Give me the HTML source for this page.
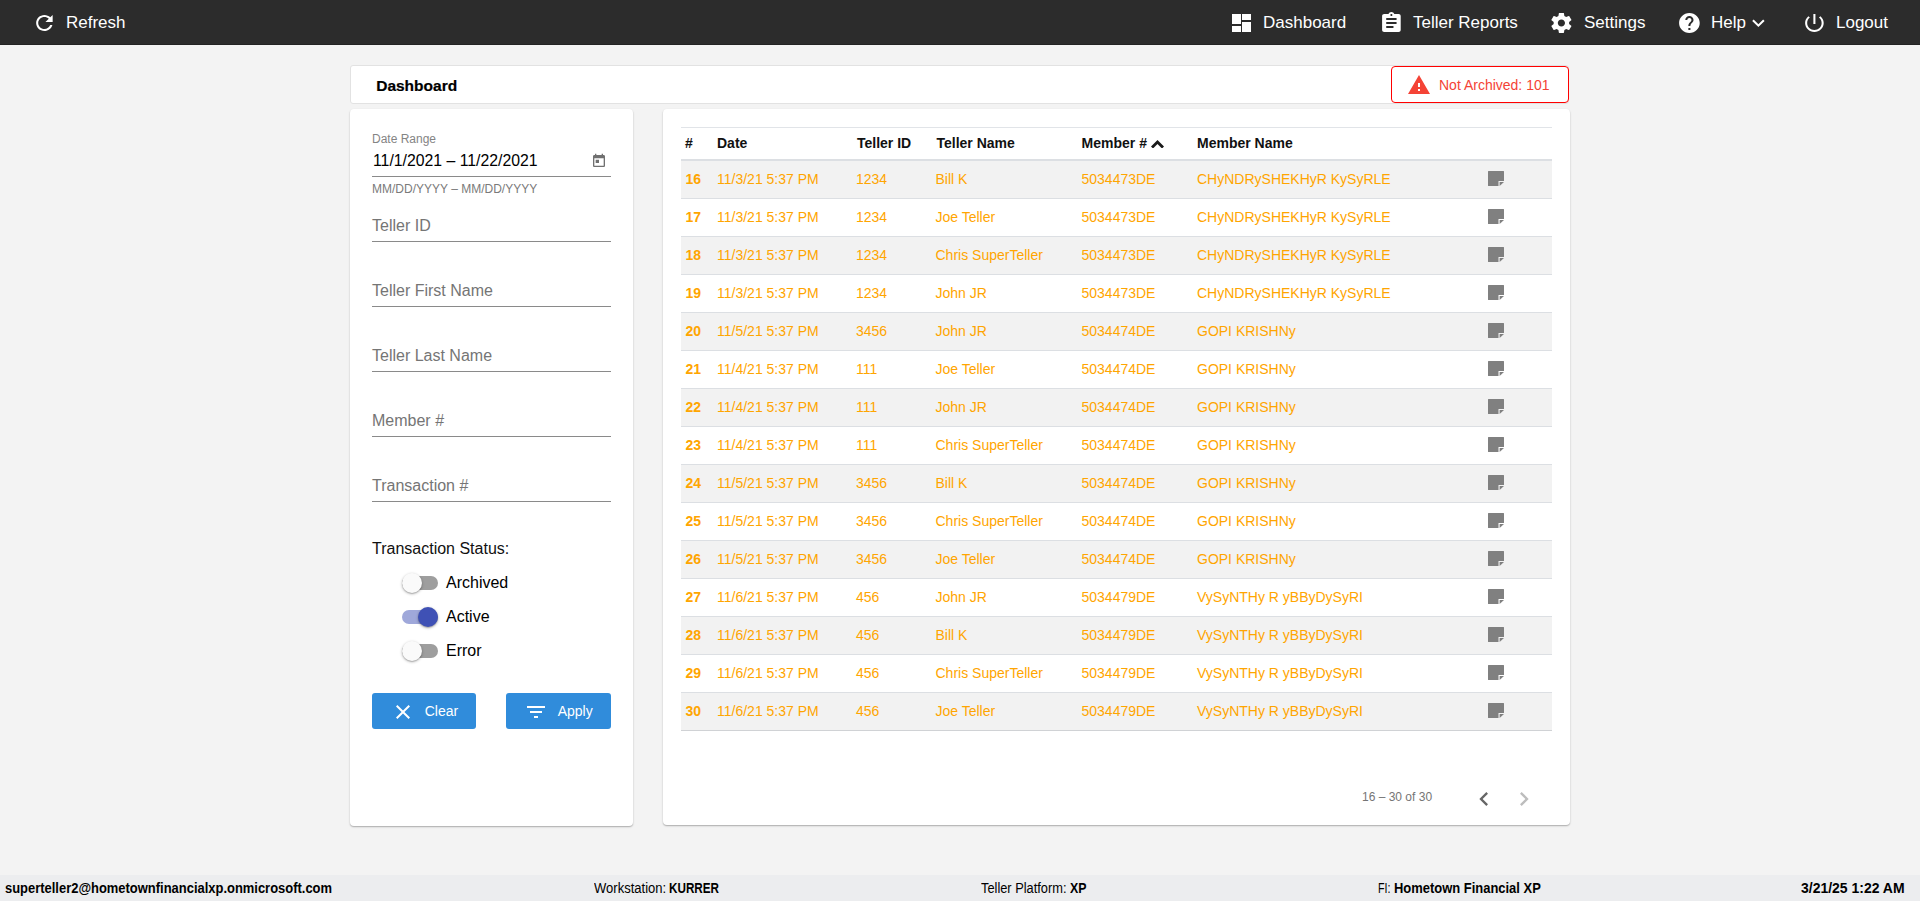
<!DOCTYPE html>
<html><head><meta charset="utf-8"><title>Dashboard</title>
<style>
*{box-sizing:border-box;margin:0;padding:0}
html,body{width:1920px;height:901px;overflow:hidden;background:#f3f3f3;font-family:"Liberation Sans",sans-serif;color:#000}
.abs{position:absolute}
#top{position:absolute;left:0;top:0;width:1920px;height:45px;background:#2c2c2c;border-bottom:1px solid #232323}
.nav{position:absolute;top:0;height:46px;line-height:46px;color:#fff;font-size:17px;white-space:nowrap}
.ico{position:absolute;fill:#fff}
#title{position:absolute;left:350px;top:65px;width:1219px;height:39px;background:#fff;border:1px solid #e2e2e2;border-radius:3px}
#title b{position:absolute;left:25.2px;top:1px;line-height:37px;font-size:15.5px;font-weight:bold;-webkit-text-stroke:.2px #000}
#na{position:absolute;left:1391px;top:66px;width:178px;height:37px;border:1px solid #ff0000;border-radius:4px;background:#fff;color:#f44336;font-size:14px;line-height:37px}
#na span{position:absolute;left:47px;top:0;white-space:nowrap}
.card{position:absolute;background:#fff;border-radius:4px;box-shadow:0 1px 2px rgba(0,0,0,.22),0 1px 1px rgba(0,0,0,.10)}
#left{left:350px;top:109px;width:283px;height:717px}
#right{left:663px;top:109px;width:907px;height:716px}
.lbl{position:absolute;left:372px;color:#757575;font-size:16px;white-space:nowrap}
.ul{position:absolute;left:372px;width:239px;height:1px;background:#8a8a8a}
.tg{position:absolute;left:402px;width:36px;height:14px}
.tg i{position:absolute;left:0;top:0;width:36px;height:14px;border-radius:7px;background:#9e9e9e}
.tg b{position:absolute;left:0;top:-3px;width:20px;height:20px;border-radius:50%;background:#fafafa;box-shadow:0 1px 3px rgba(0,0,0,.3),0 1px 1px rgba(0,0,0,.15)}
.tg.on i{background:#9fa8da}
.tg.on b{left:16px;background:#3f51b5}
.tl{position:absolute;left:446px;font-size:16px;white-space:nowrap}
.btn{position:absolute;top:693px;height:36px;background:#308cdb;border-radius:3px;color:#fff;font-size:14px;line-height:36px}
.row{position:absolute;left:681px;width:871px;height:38px;border-bottom:1px solid #dcdfe3;color:#ffa500;font-size:14px;line-height:37px;white-space:nowrap}
.row.odd{background:#f2f2f2}.row.last{border-bottom-color:#d0d2d5}
.c{position:absolute;top:0}
.c0{left:4.5px;font-weight:bold}.c1{left:36px}.c2{left:175px}.c3{left:254.5px}.c4{left:400.5px}.c5{left:516px}
.note{position:absolute;left:807px;top:10px;width:16px;height:15px;fill:#808080}
#hdr{position:absolute;left:681px;top:127px;width:871px;height:34px;border-top:1px solid #e1e4e8;border-bottom:2px solid #dcdfe3;font-size:14px;font-weight:bold;line-height:31px;color:#111;white-space:nowrap}
#foot{position:absolute;left:0;top:875px;width:1920px;height:26px;background:#ecedef;font-size:13.8px;line-height:24px;overflow:hidden;white-space:nowrap}
#foot span{position:absolute;top:2px;transform-origin:0 50%}
</style></head><body>
<div id="top"></div>
<svg class="ico" preserveAspectRatio="none" style="left:31.6px;top:11px;width:24.8px;height:24px" viewBox="0 0 24 24"><path d="M17.65 6.35C16.2 4.9 14.21 4 12 4c-4.42 0-7.99 3.58-7.99 8s3.57 8 7.99 8c3.73 0 6.84-2.55 7.73-6h-2.08c-.82 2.33-3.04 4-5.65 4-3.31 0-6-2.69-6-6s2.690-6 6-6c1.660 0 3.140.69 4.220 1.780L13 11h7V4l-2.350 2.350z"/></svg>
<div class="nav" style="left:66px">Refresh</div>
<svg class="ico" style="left:1232px;top:14px;width:19px;height:18px" viewBox="0 0 19 18" shape-rendering="crispEdges"><rect x="0" y="0" width="9" height="10"/><rect x="0" y="12" width="9" height="6"/><rect x="10" y="0" width="9" height="6"/><rect x="10" y="8" width="9" height="10"/></svg>
<div class="nav" style="left:1263px">Dashboard</div>
<svg class="ico" preserveAspectRatio="none" style="left:1378.6px;top:11px;width:24.8px;height:24px" viewBox="0 0 24 24"><path d="M19 3h-4.180C14.400 1.840 13.300 1 12 1c-1.300 0-2.400.84-2.820 2H5c-1.100 0-2 .9-2 2v14c0 1.100.9 2 2 2h14c1.100 0 2-.9 2-2V5c0-1.100-.9-2-2-2zm-7 0c.55 0 1 .45 1 1s-.45 1-1 1-1-.45-1-1 .45-1 1-1zm2 14H7v-2h7v2zm3-4H7v-2h10v2zm0-4H7V7h10v2z"/></svg>
<div class="nav" style="left:1413px">Teller Reports</div>
<svg class="ico" preserveAspectRatio="none" style="left:1549.1px;top:11px;width:24.8px;height:24px" viewBox="0 0 24 24"><path d="M19.430 12.980c.04-.32.07-.64.07-.98s-.03-.66-.07-.98l2.110-1.650c.19-.15.24-.42.12-.64l-2-3.460c-.12-.22-.39-.3-.61-.22l-2.490 1c-.52-.4-1.080-.73-1.690-.98l-.38-2.650C14.460 2.180 14.250 2 14 2h-4c-.25 0-.46.18-.49.42l-.38 2.650c-.61.25-1.170.59-1.690.98l-2.490-1c-.23-.09-.49 0-.61.22l-2 3.460c-.13.22-.07.49.12.64l2.110 1.650c-.04.32-.07.65-.07.98s.03.66.07.98l-2.110 1.650c-.19.15-.24.42-.12.640l2 3.460c.12.22.39.3.61.22l2.490-1c.52.4 1.080.73 1.690.98l.38 2.650c.03.24.24.42.49.42h4c.25 0 .46-.18.49-.42l.38-2.650c.61-.25 1.170-.59 1.690-.98l2.490 1c.23.09.49 0 .61-.22l2-3.460c.12-.22.07-.49-.12-.64l-2.110-1.650zM12 15.500c-1.930 0-3.500-1.570-3.500-3.500s1.570-3.500 3.500-3.500 3.500 1.570 3.500 3.500-1.570 3.500-3.500 3.500z"/></svg>
<div class="nav" style="left:1584px">Settings</div>
<svg class="ico" preserveAspectRatio="none" style="left:1676.6px;top:11px;width:24.8px;height:24px" viewBox="0 0 24 24"><path d="M12 2C6.480 2 2 6.480 2 12s4.480 10 10 10 10-4.480 10-10S17.520 2 12 2zm1 17h-2v-2h2v2zm2.070-7.750l-.9.92C13.450 12.900 13 13.500 13 15h-2v-.5c0-1.100.45-2.100 1.170-2.830l1.240-1.260c.37-.36.59-.86.59-1.410 0-1.100-.9-2-2-2s-2 .9-2 2H8c0-2.210 1.790-4 4-4s4 1.790 4 4c0 .88-.36 1.680-.93 2.250z"/></svg>
<div class="nav" style="left:1711px">Help</div>
<svg class="ico" preserveAspectRatio="none" style="left:1745.6px;top:11px;width:24.8px;height:24px" viewBox="0 0 24 24"><path d="M16.590 8.590L12 13.170 7.410 8.590 6 10l6 6 6-6z"/></svg>
<svg class="ico" preserveAspectRatio="none" style="left:1801.6px;top:11px;width:24.8px;height:24px" viewBox="0 0 24 24"><path d="M13 3h-2v10h2V3zm4.830 2.170l-1.420 1.420C17.990 7.860 19 9.810 19 12c0 3.870-3.130 7-7 7s-7-3.130-7-7c0-2.190 1.010-4.140 2.580-5.420L6.170 5.170C4.230 6.820 3 9.260 3 12c0 4.970 4.030 9 9 9s9-4.030 9-9c0-2.740-1.230-5.180-3.170-6.830z"/></svg>
<div class="nav" style="left:1836px">Logout</div>

<div id="title"><b>Dashboard</b></div>
<div id="na"><svg class="abs" style="left:14.5px;top:6px;width:24px;height:24px;fill:#f44336" viewBox="0 0 24 24"><path d="M1 21h22L12 2 1 21zm12-3h-2v-2h2v2zm0-4h-2v-4h2v4z"/></svg><span>Not Archived: 101</span></div>

<div id="left" class="card"></div>
<div class="lbl" style="top:131.5px;font-size:12px;color:#848484">Date Range</div>
<div class="lbl" style="top:151.5px;left:373px;font-size:15.8px;color:#000">11/1/2021 – 11/22/2021</div>
<svg class="abs" style="left:591px;top:153px;width:16px;height:16px;fill:#707070" viewBox="0 0 24 24"><path d="M19 3h-1V1h-2v2H8V1H6v2H5c-1.110 0-1.990.9-1.990 2L3 19c0 1.100.89 2 2 2h14c1.100 0 2-.9 2-2V5c0-1.100-.9-2-2-2zm0 16H5V8h14v11zM7 10h5v5H7z"/></svg>
<div class="ul" style="top:176px"></div>
<div class="lbl" style="top:182px;font-size:12px;color:#7a7a7a">MM/DD/YYYY – MM/DD/YYYY</div>
<div class="lbl" style="top:217px">Teller ID</div><div class="ul" style="top:241px"></div>
<div class="lbl" style="top:282px">Teller First Name</div><div class="ul" style="top:306px"></div>
<div class="lbl" style="top:347px">Teller Last Name</div><div class="ul" style="top:371px"></div>
<div class="lbl" style="top:412px">Member #</div><div class="ul" style="top:436px"></div>
<div class="lbl" style="top:477px">Transaction #</div><div class="ul" style="top:501px"></div>
<div class="lbl" style="top:540px;color:#111">Transaction Status:</div>
<div class="tg" style="top:576px"><i></i><b></b></div><div class="tl" style="top:574px">Archived</div>
<div class="tg on" style="top:610px"><i></i><b></b></div><div class="tl" style="top:608px">Active</div>
<div class="tg" style="top:644px"><i></i><b></b></div><div class="tl" style="top:642px">Error</div>
<div class="btn" style="left:372px;width:104px"><svg class="abs" style="left:19px;top:7px;width:24px;height:24px;fill:#fff" viewBox="0 0 24 24"><path d="M19 6.410L17.590 5 12 10.590 6.410 5 5 6.410 10.590 12 5 17.590 6.410 19 12 13.410 17.590 19 19 17.590 13.410 12z"/></svg><span class="abs" style="left:52.7px;top:0">Clear</span></div>
<div class="btn" style="left:506px;width:105px"><svg class="abs" style="left:18px;top:7px;width:24px;height:24px;fill:#fff" viewBox="0 0 24 24"><path d="M10 18h4v-2h-4v2zM3 6v2h18V6H3zm3 7h12v-2H6v2z"/></svg><span class="abs" style="left:51.7px;top:0">Apply</span></div>

<div id="right" class="card"></div>
<div id="hdr">
<span class="c" style="left:4px">#</span><span class="c" style="left:36px">Date</span><span class="c" style="left:176px">Teller ID</span><span class="c" style="left:255.5px">Teller Name</span><span class="c" style="left:400.6px">Member #</span><span class="c" style="left:516px">Member Name</span>
<svg class="abs" style="left:470.3px;top:11.7px;width:13px;height:8.5px;fill:#1a1a1a" viewBox="0 0 13 8.5"><path d="M6.5 0L0 6.5l2 2L6.5 4 11 8.500l2-2z"/></svg>
</div>
<div class="row odd" style="top:161px"><span class="c c0">16</span><span class="c c1">11/3/21 5:37 PM</span><span class="c c2">1234</span><span class="c c3">Bill K</span><span class="c c4">5034473DE</span><span class="c c5">CHyNDRySHEKHyR KySyRLE</span><svg class="note" viewBox="0 0 16 15"><path d="M.5 0h15a.5.5 0 0 1 .5.500V10h-5.500v5H.5a.5.5 0 0 1-.5-.5V.5A.5.5 0 0 1 .5 0z"/><path d="M11.600 11.100H16L11.600 15z"/></svg></div>
<div class="row" style="top:199px"><span class="c c0">17</span><span class="c c1">11/3/21 5:37 PM</span><span class="c c2">1234</span><span class="c c3">Joe Teller</span><span class="c c4">5034473DE</span><span class="c c5">CHyNDRySHEKHyR KySyRLE</span><svg class="note" viewBox="0 0 16 15"><path d="M.5 0h15a.5.5 0 0 1 .5.500V10h-5.500v5H.5a.5.5 0 0 1-.5-.5V.5A.5.5 0 0 1 .5 0z"/><path d="M11.600 11.100H16L11.600 15z"/></svg></div>
<div class="row odd" style="top:237px"><span class="c c0">18</span><span class="c c1">11/3/21 5:37 PM</span><span class="c c2">1234</span><span class="c c3">Chris SuperTeller</span><span class="c c4">5034473DE</span><span class="c c5">CHyNDRySHEKHyR KySyRLE</span><svg class="note" viewBox="0 0 16 15"><path d="M.5 0h15a.5.5 0 0 1 .5.500V10h-5.500v5H.5a.5.5 0 0 1-.5-.5V.5A.5.5 0 0 1 .5 0z"/><path d="M11.600 11.100H16L11.600 15z"/></svg></div>
<div class="row" style="top:275px"><span class="c c0">19</span><span class="c c1">11/3/21 5:37 PM</span><span class="c c2">1234</span><span class="c c3">John JR</span><span class="c c4">5034473DE</span><span class="c c5">CHyNDRySHEKHyR KySyRLE</span><svg class="note" viewBox="0 0 16 15"><path d="M.5 0h15a.5.5 0 0 1 .5.500V10h-5.500v5H.5a.5.5 0 0 1-.5-.5V.5A.5.5 0 0 1 .5 0z"/><path d="M11.600 11.100H16L11.600 15z"/></svg></div>
<div class="row odd" style="top:313px"><span class="c c0">20</span><span class="c c1">11/5/21 5:37 PM</span><span class="c c2">3456</span><span class="c c3">John JR</span><span class="c c4">5034474DE</span><span class="c c5">GOPI KRISHNy</span><svg class="note" viewBox="0 0 16 15"><path d="M.5 0h15a.5.5 0 0 1 .5.500V10h-5.500v5H.5a.5.5 0 0 1-.5-.5V.5A.5.5 0 0 1 .5 0z"/><path d="M11.600 11.100H16L11.600 15z"/></svg></div>
<div class="row" style="top:351px"><span class="c c0">21</span><span class="c c1">11/4/21 5:37 PM</span><span class="c c2">111</span><span class="c c3">Joe Teller</span><span class="c c4">5034474DE</span><span class="c c5">GOPI KRISHNy</span><svg class="note" viewBox="0 0 16 15"><path d="M.5 0h15a.5.5 0 0 1 .5.500V10h-5.500v5H.5a.5.5 0 0 1-.5-.5V.5A.5.5 0 0 1 .5 0z"/><path d="M11.600 11.100H16L11.600 15z"/></svg></div>
<div class="row odd" style="top:389px"><span class="c c0">22</span><span class="c c1">11/4/21 5:37 PM</span><span class="c c2">111</span><span class="c c3">John JR</span><span class="c c4">5034474DE</span><span class="c c5">GOPI KRISHNy</span><svg class="note" viewBox="0 0 16 15"><path d="M.5 0h15a.5.5 0 0 1 .5.500V10h-5.500v5H.5a.5.5 0 0 1-.5-.5V.5A.5.5 0 0 1 .5 0z"/><path d="M11.600 11.100H16L11.600 15z"/></svg></div>
<div class="row" style="top:427px"><span class="c c0">23</span><span class="c c1">11/4/21 5:37 PM</span><span class="c c2">111</span><span class="c c3">Chris SuperTeller</span><span class="c c4">5034474DE</span><span class="c c5">GOPI KRISHNy</span><svg class="note" viewBox="0 0 16 15"><path d="M.5 0h15a.5.5 0 0 1 .5.500V10h-5.500v5H.5a.5.5 0 0 1-.5-.5V.5A.5.5 0 0 1 .5 0z"/><path d="M11.600 11.100H16L11.600 15z"/></svg></div>
<div class="row odd" style="top:465px"><span class="c c0">24</span><span class="c c1">11/5/21 5:37 PM</span><span class="c c2">3456</span><span class="c c3">Bill K</span><span class="c c4">5034474DE</span><span class="c c5">GOPI KRISHNy</span><svg class="note" viewBox="0 0 16 15"><path d="M.5 0h15a.5.5 0 0 1 .5.500V10h-5.500v5H.5a.5.5 0 0 1-.5-.5V.5A.5.5 0 0 1 .5 0z"/><path d="M11.600 11.100H16L11.600 15z"/></svg></div>
<div class="row" style="top:503px"><span class="c c0">25</span><span class="c c1">11/5/21 5:37 PM</span><span class="c c2">3456</span><span class="c c3">Chris SuperTeller</span><span class="c c4">5034474DE</span><span class="c c5">GOPI KRISHNy</span><svg class="note" viewBox="0 0 16 15"><path d="M.5 0h15a.5.5 0 0 1 .5.500V10h-5.500v5H.5a.5.5 0 0 1-.5-.5V.5A.5.5 0 0 1 .5 0z"/><path d="M11.600 11.100H16L11.600 15z"/></svg></div>
<div class="row odd" style="top:541px"><span class="c c0">26</span><span class="c c1">11/5/21 5:37 PM</span><span class="c c2">3456</span><span class="c c3">Joe Teller</span><span class="c c4">5034474DE</span><span class="c c5">GOPI KRISHNy</span><svg class="note" viewBox="0 0 16 15"><path d="M.5 0h15a.5.5 0 0 1 .5.500V10h-5.500v5H.5a.5.5 0 0 1-.5-.5V.5A.5.5 0 0 1 .5 0z"/><path d="M11.600 11.100H16L11.600 15z"/></svg></div>
<div class="row" style="top:579px"><span class="c c0">27</span><span class="c c1">11/6/21 5:37 PM</span><span class="c c2">456</span><span class="c c3">John JR</span><span class="c c4">5034479DE</span><span class="c c5">VySyNTHy R yBByDySyRI</span><svg class="note" viewBox="0 0 16 15"><path d="M.5 0h15a.5.5 0 0 1 .5.500V10h-5.500v5H.5a.5.5 0 0 1-.5-.5V.5A.5.5 0 0 1 .5 0z"/><path d="M11.600 11.100H16L11.600 15z"/></svg></div>
<div class="row odd" style="top:617px"><span class="c c0">28</span><span class="c c1">11/6/21 5:37 PM</span><span class="c c2">456</span><span class="c c3">Bill K</span><span class="c c4">5034479DE</span><span class="c c5">VySyNTHy R yBByDySyRI</span><svg class="note" viewBox="0 0 16 15"><path d="M.5 0h15a.5.5 0 0 1 .5.500V10h-5.500v5H.5a.5.5 0 0 1-.5-.5V.5A.5.5 0 0 1 .5 0z"/><path d="M11.600 11.100H16L11.600 15z"/></svg></div>
<div class="row" style="top:655px"><span class="c c0">29</span><span class="c c1">11/6/21 5:37 PM</span><span class="c c2">456</span><span class="c c3">Chris SuperTeller</span><span class="c c4">5034479DE</span><span class="c c5">VySyNTHy R yBByDySyRI</span><svg class="note" viewBox="0 0 16 15"><path d="M.5 0h15a.5.5 0 0 1 .5.500V10h-5.500v5H.5a.5.5 0 0 1-.5-.5V.5A.5.5 0 0 1 .5 0z"/><path d="M11.600 11.100H16L11.600 15z"/></svg></div>
<div class="row odd last" style="top:693px"><span class="c c0">30</span><span class="c c1">11/6/21 5:37 PM</span><span class="c c2">456</span><span class="c c3">Joe Teller</span><span class="c c4">5034479DE</span><span class="c c5">VySyNTHy R yBByDySyRI</span><svg class="note" viewBox="0 0 16 15"><path d="M.5 0h15a.5.5 0 0 1 .5.500V10h-5.500v5H.5a.5.5 0 0 1-.5-.5V.5A.5.5 0 0 1 .5 0z"/><path d="M11.600 11.100H16L11.600 15z"/></svg></div>
<div class="abs" style="left:1362px;top:790px;font-size:12px;color:#757575;white-space:nowrap">16 – 30 of 30</div>
<svg class="abs" style="left:1469.7px;top:785px;width:28px;height:28px;fill:#666" viewBox="0 0 24 24"><path d="M15.410 7.410L14 6l-6 6 6 6 1.410-1.410L10.830 12z"/></svg>
<svg class="abs" style="left:1509.7px;top:785px;width:28px;height:28px;fill:#bdbdbd" viewBox="0 0 24 24"><path d="M10 6L8.590 7.410 13.170 12l-4.580 4.590L10 18l6-6z"/></svg>

<div id="foot">
<span id="f1" style="left:5px;transform:scaleX(0.9384);font-weight:bold">superteller2@hometownfinancialxp.onmicrosoft.com</span>
<span id="f2" style="left:593.8px;transform:scaleX(0.9448)">Workstation:</span><span id="f2b" style="left:668.9px;transform:scaleX(0.847);font-weight:bold">KURRER</span>
<span id="f3" style="left:981px;transform:scaleX(0.9291)">Teller Platform:</span><span id="f3b" style="left:1070px;transform:scaleX(0.8963);font-weight:bold">XP</span>
<span id="f4" style="left:1378px;transform:scaleX(0.7759)">FI:</span><span id="f4b" style="left:1394px;transform:scaleX(0.9387);font-weight:bold">Hometown Financial XP</span>
<span id="f5" style="left:1801.2px;transform:scaleX(1.013);font-weight:bold">3/21/25 1:22 AM</span>
</div>
</body></html>
